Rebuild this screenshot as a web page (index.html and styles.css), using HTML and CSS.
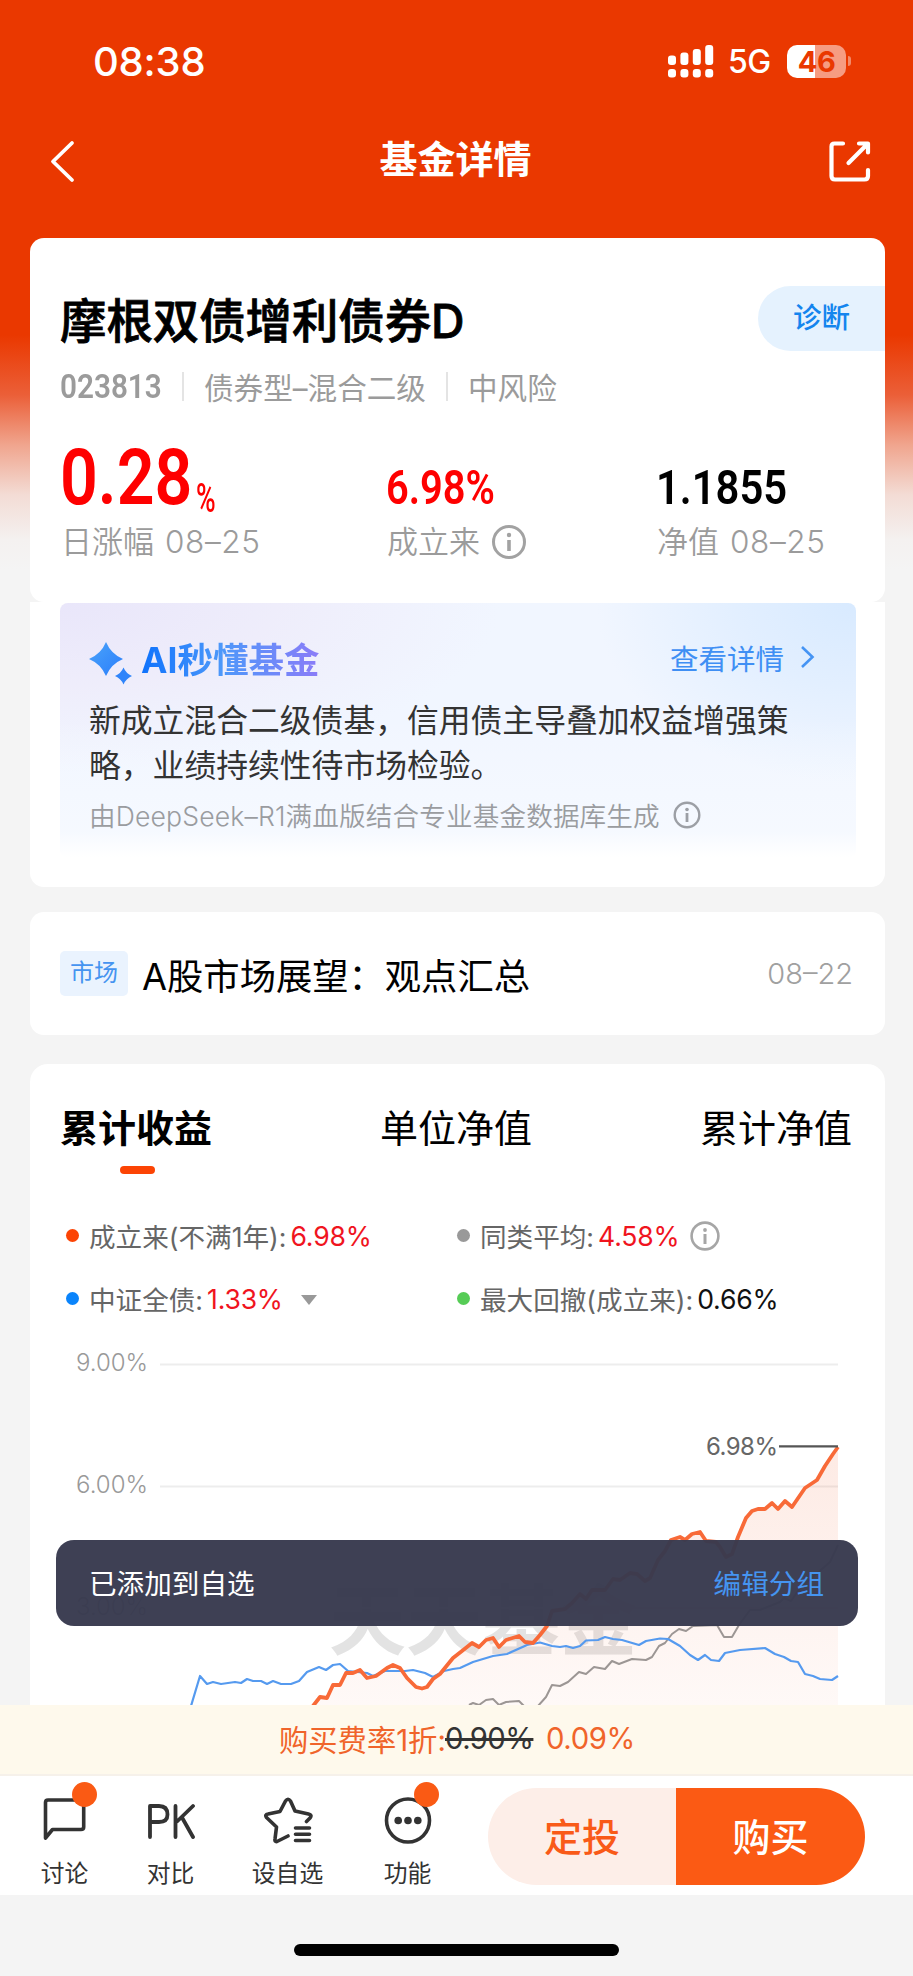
FILE: index.html
```html
<!DOCTYPE html>
<html lang="zh-CN">
<head>
<meta charset="utf-8">
<title>基金详情</title>
<link rel="stylesheet" href="styles.css">
</head>
<body>
<div class="screen">
  <div class="status">
    <span class="time">08:38</span>
    <div class="status-right">
      <svg class="signal" width="46" height="33" viewBox="0 0 46 33" fill="#fff">
        <rect x="0" y="10.500" width="8" height="9.500" rx="3"/><rect x="12.400" y="7.500" width="8" height="12.500" rx="3"/><rect x="24.800" y="4" width="8" height="16" rx="3"/><rect x="37.200" y="0" width="8" height="20" rx="3"/>
        <rect x="0" y="24" width="8" height="8.500" rx="3"/><rect x="12.400" y="24" width="8" height="8.500" rx="3"/><rect x="24.800" y="24" width="8" height="8.500" rx="3"/><rect x="37.200" y="24" width="8" height="8.500" rx="3"/>
      </svg>
      <span class="net">5G</span>
      <div class="battery">46</div>
      <i class="battery-cap"></i>
    </div>
  </div>
  <div class="navbar">
    <svg width="26" height="44" viewBox="0 0 26 44"><path d="M22 4L3 22.500L22 41" fill="none" stroke="#fff" stroke-width="3.800" stroke-linecap="round" stroke-linejoin="round"/></svg>
    <h1>基金详情</h1>
    <svg width="44" height="44" viewBox="0 0 44 44" fill="none" stroke="#fff" stroke-width="4.200" stroke-linecap="round" stroke-linejoin="round"><path d="M15 4.500H6.500Q3.500 4.500 3.500 7.500V37Q3.500 40.500 7 40.500H36.500Q40 40.500 40 37V31M31 4.500H40V13.500M39 5.500L20.500 24"/></svg>
  </div>

  <section class="card summary">
    <div class="name-row">
      <h2>摩根双债增利债券D</h2>
      <div class="diag">诊断</div>
    </div>
    <div class="meta">
      <span class="din code"><b>023813</b></span><i></i><span>债券型–混合二级</span><i></i><span>中风险</span>
    </div>
    <div class="stats">
      <div class="stat day"><div class="num"><span class="din big">0.28</span><span class="din pct">%</span></div><div class="lab">日涨幅<span class="day-date">08–25</span></div></div>
      <div class="stat since"><div class="num"><span class="din mid">6.98%</span></div><div class="lab">成立来
        <svg width="36" height="36" viewBox="0 0 36 36"><circle cx="18" cy="18" r="15.500" fill="none" stroke="#a2a2a2" stroke-width="3"/><circle cx="18" cy="11" r="2.200" fill="#a2a2a2"/><path d="M18 16V27" stroke="#a2a2a2" stroke-width="3.600"/></svg></div></div>
      <div class="stat nav"><div class="num"><span class="din net-val">1.1855</span></div><div class="lab">净值<span class="day-date">08–25</span></div></div>
    </div>
  </section>

  <section class="card ai-card">
    <div class="ai">
      <div class="ai-head">
        <svg width="44" height="44" viewBox="0 0 44 44"><defs><linearGradient id="g" x1="0" y1="0" x2="1" y2="1"><stop offset="0" stop-color="#4ba4fa"/><stop offset="1" stop-color="#2a7dfb"/></linearGradient></defs><path d="M17 1Q22 13 34 18Q22 23 17 35Q12 23 0 18Q12 13 17 1Z" fill="url(#g)"/><path d="M34.500 26.500Q37 32.500 43 35Q37 37.500 34.500 43.500Q32 37.500 26 35Q32 32.500 34.500 26.500Z" fill="#2f84fa"/></svg>
        <strong>AI秒懂基金</strong>
        <span class="more">查看详情</span>
        <svg width="16" height="26" viewBox="0 0 16 26"><path d="M2 3L12.500 13L2 23" fill="none" stroke="#4594f4" stroke-width="2.600"/></svg>
      </div>
      <p>新成立混合二级债基，信用债主导叠加权益增强策略，业绩持续性待市场检验。</p>
      <div class="source"><span>由DeepSeek–R1满血版结合专业基金数据库生成</span>
        <svg width="28" height="28" viewBox="0 0 28 28"><circle cx="14" cy="14" r="12.300" fill="none" stroke="#9c9fa5" stroke-width="2.400"/><circle cx="14" cy="8.500" r="1.800" fill="#9c9fa5"/><path d="M14 12V21" stroke="#9c9fa5" stroke-width="2.800"/></svg></div>
    </div>
  </section>

  <section class="card market">
    <span class="tag">市场</span><span class="headline">A股市场展望：观点汇总</span><span class="date">08–22</span>
  </section>

  <section class="card chart-card">
    <div class="tabs">
      <div class="tab active">累计收益<i></i></div><div class="tab">单位净值</div><div class="tab">累计净值</div>
    </div>
    <div class="legend">
      <div class="item"><i class="dot red"></i><span>成立来(不满1年):</span><b>6.98%</b></div>
      <div class="item"><i class="dot gray"></i><span>同类平均:</span><b>4.58%</b>
        <svg class="info" width="30" height="30" viewBox="0 0 30 30"><circle cx="15" cy="15" r="13.400" fill="none" stroke="#a6a6a6" stroke-width="2.600"/><circle cx="15" cy="9" r="1.900" fill="#a6a6a6"/><path d="M15 13V23" stroke="#a6a6a6" stroke-width="3"/></svg></div>
      <div class="item"><i class="dot blue"></i><span>中证全债:</span><b>1.33%</b><i class="caret"></i></div>
      <div class="item"><i class="dot green"></i><span>最大回撤(成立来):</span><b class="dark">0.66%</b></div>
    </div>
    <svg class="chart" width="855" height="375" viewBox="30 1330 855 375">
      <defs><linearGradient id="fill" gradientUnits="userSpaceOnUse" x1="0" y1="1447" x2="0" y2="1705"><stop offset="0" stop-color="#f26a3c" stop-opacity=".14"/><stop offset="1" stop-color="#f26a3c" stop-opacity=".04"/></linearGradient></defs>
      <text class="watermark" x="329" y="1649">天天基金</text>
      <g stroke="#ededed" stroke-width="2"><path d="M160 1364.500H838M160 1486.500H838M160 1608H838"/></g>
      <g class="axis"><text x="76" y="1371" textLength="72">9.00%</text><text x="76" y="1493" textLength="72">6.00%</text><text x="76" y="1614.500" textLength="72">3.00%</text></g>
      <path fill="url(#fill)" d="M313 1706L320 1697L327 1698L333 1685L340 1685L346 1673L360 1670L367 1678L376 1676L393 1665L400 1668L407 1678L416 1687L422 1688L427 1687L433 1679L440 1674L453 1658L472 1643L479 1647L486 1640L493 1638L499 1647L506 1640L519 1636L525 1642L533 1643L547 1626L552 1611L565 1609L580 1594L586 1599L592 1590L605 1590L613 1579L630 1573L645 1581L650 1578L658 1560L671 1540L680 1537L685 1540L692 1534L700 1532L706 1541L716 1542L726 1557L732 1554L738 1537L746 1518L752 1511L765 1509L772 1503L778 1509L785 1501L792 1507L805 1488L817 1480L838 1447V1706Z"/>
      <g fill="none" stroke-linejoin="round">
        <path stroke="#9c9694" stroke-width="2" d="M469 1705L473 1703L479 1705L486 1700L493 1699L499 1705L506 1702L519 1701L524 1706L538 1706L546 1697L552 1685L560 1686L568 1682L579 1672L586 1674L594 1667L605 1669L612 1661L619 1664L632 1659L646 1660L652 1657L659 1646L665 1643L672 1634L679 1629L686 1631L693 1626L717 1625L724 1637L732 1637L739 1625L750 1610L760 1610L780 1602L784 1598L791 1601L800 1588L830 1562L838 1545"/>
        <path stroke="#559aef" stroke-width="2.200" d="M191 1706L200 1676L207 1684L213 1682L221 1684L235 1682L241 1683L247 1679L253 1681L261 1681L267 1684L273 1681L281 1684L291 1684L299 1681L307 1672L319 1667L326 1670L333 1665L340 1664L348 1671L367 1673L373 1676L385 1671L405 1671L413 1670L425 1673L433 1677L444 1671L453 1669L460 1668L473 1662L493 1656L507 1654L527 1645L540 1642.500L552 1646L560 1647L566 1646L573 1648L580 1646L586 1640.500L598 1640L605 1637L613 1639L622 1640L639 1645L646 1641L660 1638.500L668 1639L680 1646L690 1655L698 1660L705 1655L711 1660L719 1661L725 1653L740 1650L765 1648L775 1654L784 1657L791 1661L798 1662L805 1674L813 1676L820 1679L832 1680L838 1676"/>
        <path stroke="#f86a38" stroke-width="3.800" d="M313 1706L320 1697L327 1698L333 1685L340 1685L346 1673L353 1673L360 1670L367 1678L376 1676L387 1668L393 1665L400 1668L407 1678L416 1687L422 1688.500L427 1687L433 1679L440 1674L453 1658L462 1651L472 1643L479 1647L486 1640L493 1638L499 1647L506 1640L519 1636L525 1642L533 1643L540 1635L547 1626L552 1611L565 1609L572 1603L580 1594L586 1599L592 1590L605 1590L613 1579L620 1580L630 1573L637 1574L645 1581L650 1578L658 1560L665 1551L671 1540L680 1537L685 1540L692 1534L700 1532L706 1541L716 1542L720 1547L726 1557L732 1554L738 1537L746 1518L752 1511L758 1509L765 1509L772 1503L778 1509L785 1501L792 1507L805 1488L817 1480L825 1466L833 1454L838 1447"/>
      </g>
      <path d="M779 1446.300H838" stroke="#555" stroke-width="2.200"/>
      <text class="mark" x="706" y="1455" textLength="72">6.98%</text>
    </svg>
    <div class="toast"><span>已添加到自选</span><a>编辑分组</a></div>
  </section>

  <div class="fee"><span class="fee-label">购买费率1折:</span><s>0.90%</s><span class="fee-now">0.09%</span></div>

  <div class="bottom">
    <div class="act">
      <div class="ico"><svg width="48" height="50" viewBox="0 0 48 50" fill="none" stroke="#333" stroke-width="3.600" stroke-linejoin="round"><path d="M4.500 44V8.500Q4.500 6 7 6H40Q42.700 6 42.700 8.500V33Q42.700 35.500 40 35.500H11.500Z"/></svg><i class="badge chat"></i></div><span>讨论</span></div>
    <div class="act">
      <div class="ico"><svg width="48" height="50" viewBox="0 0 48 50" fill="none" stroke="#333" stroke-width="3.800" stroke-linecap="round" stroke-linejoin="round"><path d="M3 43V12H12Q20.500 12 20.500 20.500Q20.500 28 12 28H3M28.500 12V43M46 12L30 27.500M35 23.500L46 43"/></svg></div><span>对比</span></div>
    <div class="act">
      <div class="ico"><svg width="50" height="50" viewBox="0 0 50 50" fill="none" stroke="#333" stroke-width="3.600" stroke-linecap="round" stroke-linejoin="round"><path d="M25 42L14 47.500Q11.500 48 12 45L13.500 33L3.500 23.500Q1.500 20.500 5 20L17 17.500L22.500 7Q25 3.500 27.500 7L32 17L45.500 20Q49.500 21 47 24L43.500 27.500"/><path d="M32.500 34H46.500M32.500 40.300H46.500M32.500 46.500H46.500"/></svg></div><span>设自选</span></div>
    <div class="act">
      <div class="ico"><svg width="48" height="50" viewBox="0 0 48 50"><circle cx="24" cy="26.500" r="21.500" fill="none" stroke="#333" stroke-width="3.600"/><g fill="#333"><circle cx="14.200" cy="26.500" r="3.800"/><circle cx="24" cy="26.500" r="3.800"/><circle cx="33.800" cy="26.500" r="3.800"/></g></svg><i class="badge func"></i></div><span>功能</span></div>
    <div class="buttons"><div class="plan">定投</div><div class="buy">购买</div></div>
  </div>
  <div class="home"><i></i></div>
</div>
</body>
</html>
```
FILE: styles.css
```css
* { box-sizing: border-box; }
body { margin: 0; }
.screen {
  width: 913px; height: 1976px; overflow: hidden;
  display: flex; flex-direction: column;
  font-family: Inter, "Noto Sans CJK SC", sans-serif;
  color: #000; white-space: nowrap;
  background: linear-gradient(180deg, #ea3800 0, #ea3800 335px, #eb5f38 395px, #f0a58e 445px, #f3dcd5 495px, #f4f1f0 540px, #f4f4f4 570px);
}
h1, h2, p { margin: 0; }
svg { flex: none; display: block; }

.status { height: 122px; padding: 0 62px 0 93px; display: flex; align-items: center; justify-content: space-between; color: #fff; }
.time { font-size: 40px; font-weight: 550; letter-spacing: -0.2px; }
.status-right { display: flex; align-items: center; }
.net { margin-left: 14px; width: 44px; font-size: 32px; font-weight: 450; letter-spacing: -0.5px; }
.battery {
  margin-left: 15px; width: 59px; height: 33px; border-radius: 10px; line-height: 33px;
  text-align: center; font-size: 29px; font-weight: 700; color: #ea3800; letter-spacing: -0.5px;
  background: linear-gradient(90deg, #fff 47%, #f69c82 47%);
}
.battery-cap { width: 3px; height: 10px; margin-left: 2px; border-radius: 0 4px 4px 0; background: #f28a6a; }

.navbar { height: 116px; padding: 0 41px 38px 50px; display: flex; align-items: center; justify-content: space-between; color: #fff; }
.navbar h1 { font-size: 38px; font-weight: 700; margin-left: 7px; line-height: 48px; padding-bottom: 5px; }

.card { width: 855px; margin-left: 30px; background: #fff; border-radius: 14px; flex: none; }
.summary { height: 364px; padding-left: 30px; }
.name-row { height: 65px; margin-top: 48px; display: flex; align-items: center; justify-content: space-between; }
.name-row h2 { font-size: 46.400px; font-weight: 500; line-height: 65px; padding-top: 5px; -webkit-text-stroke: .8px #000; }
.diag { width: 127px; height: 65px; border-radius: 33px 0 0 33px; background: #e5f2fe; color: #1485ee; font-size: 28.500px; font-weight: 500; line-height: 63px; padding-left: 35px; }
.meta { height: 34px; margin-top: 18px; display: flex; align-items: center; color: #9b9b9b; font-size: 29.600px; }
.meta i { width: 2px; height: 29px; background: #e4e4e4; margin: 0 20px; }
.din { display: inline-block; font-family: Roboto, sans-serif; transform-origin: 0 50%; white-space: nowrap; }
.code { width: 102px; font-size: 33px; transform: scaleX(.9); }
.code b { font-weight: 600; }
.stats { display: flex; }
.stat { height: 150px; }
.day { width: 326px; }
.since { width: 270px; }
.num { height: 118px; display: flex; align-items: flex-end; color: #fe0000; font-weight: 600; }
.big { font-size: 77px; line-height: 86px; width: 136px; transform: scaleX(.86); }
.pct { font-size: 41px; line-height: 46px; transform: scaleX(.65); font-weight: 500; }
.mid { font-size: 48px; line-height: 66px; transform: scaleX(.83); }
.net-val { font-size: 48px; line-height: 66px; color: #000; transform: scaleX(.87); }
.lab { height: 40px; line-height: 40px; margin-top: 1px; padding-left: 1px; display: flex; align-items: center; color: #9b9b9b; font-size: 31px; font-weight: 350; }
.lab svg { margin-left: 11px; }
.day-date { font-size: 31.500px; margin-left: 11px; letter-spacing: .6px; }

.ai-card { height: 285px; padding: 1px 29px 0 30px; border-radius: 0 0 14px 14px; }
.ai {
  height: 254px; border-radius: 8px; padding: 29px 40px 0 29px;
  background:
    linear-gradient(180deg, rgba(255,255,255,0) 45%, rgba(250,252,255,.5) 90%, #fff 100%),
    radial-gradient(ellipse 260px 180px at 100% 0, #d8eaff 0, rgba(216,234,255,.6) 45%, rgba(216,234,255,0) 100%),
    radial-gradient(ellipse 440px 170px at 0 0, #e9e6fa 0, rgba(238,235,250,.8) 50%, rgba(243,247,255,0) 100%),
    #f1f6ff;
}
.ai-head { height: 50px; display: flex; align-items: center; }
.ai-head > svg:first-child { margin-top: 11px; }
.ai-head strong { margin-left: 8px; font-size: 35.500px; font-weight: 700; color: transparent; background: linear-gradient(90deg, #0e72fc, #4d98fa 45%, #8b7cf8); -webkit-background-clip: text; background-clip: text; }
.more { margin-left: auto; margin-right: 16px; color: #3f8ff4; font-size: 28.500px; }
.ai p { margin-top: 16px; width: 704px; white-space: normal; font-size: 31.800px; line-height: 45px; color: #333; }
.source { height: 44px; margin-top: 5px; display: flex; align-items: center; color: #9a9ca0; font-size: 26.600px; font-weight: 350; }
.source span { letter-spacing: .14px; padding-bottom: 2px; }
.source svg { margin-left: 13px; }

.market { height: 123px; margin-top: 25px; padding: 0 32px 0 30px; display: flex; align-items: center; }
.tag { width: 68px; height: 45px; border-radius: 5px; background: #eaf3fe; color: #4594f0; font-size: 24px; line-height: 43px; text-align: center; }
.headline { margin-left: 14px; font-size: 36.300px; }
.date { margin-left: auto; font-size: 29px; font-weight: 350; color: #a0a0a0; }

.chart-card { position: relative; height: 641px; margin-top: 29px; border-radius: 18px 18px 0 0; overflow: hidden; }
.tabs { height: 140px; padding: 40px 33px 0 30px; display: flex; justify-content: space-between; font-size: 38px; line-height: 48px; }
.tab.active { font-weight: 700; }
.tab i { display: block; width: 35px; height: 8px; margin: 14px 0 0 60px; border-radius: 4px; background: #fc4404; }
.legend { height: 126px; padding-left: 36px; display: grid; grid-template-columns: 391px 1fr; grid-template-rows: 63px 63px; }
.item { display: flex; align-items: center; font-size: 26.600px; color: #666; }
.item b { margin-left: 4px; font-weight: 400; color: #f0141e; letter-spacing: -.2px; }
.item .dark { color: #111; }
.dot { width: 13px; height: 13px; border-radius: 50%; margin-right: 10px; }
.red { background: #fc4404; } .gray { background: #999; } .blue { background: #0a84fb; } .green { background: #56cc56; }
.info { margin-left: 11px; }
.caret { margin: 3px 0 0 18px; border: 8px solid transparent; border-top: 10px solid #999; border-bottom: 0; }
.axis { font-size: 24px; fill: #999; font-weight: 350; }
.mark { font-size: 24px; fill: #666; }
.watermark { font-size: 77px; font-weight: 700; fill: #e3e3e3; }
.toast {
  position: absolute; left: 26px; top: 476px; width: 802px; height: 86px; border-radius: 18px;
  padding: 0 34px 2px 33px; display: flex; align-items: center; justify-content: space-between;
  background: rgba(56,58,78,.97); color: #fff; font-size: 27.600px;
}
.toast a { color: #4594f0; }

.fee { flex: none; height: 71px; padding: 0 0 3px 279px; display: flex; align-items: center; background: #fef9ec; border-bottom: 2px solid #f6f1ea; font-size: 29.300px; color: #f0642a; }
.fee-label { width: 166px; }
.fee s { color: #333; text-decoration-thickness: 2.500px; width: 87px; letter-spacing: -.6px; }
.fee-now { margin-left: 14px; letter-spacing: -.4px; }

.bottom { flex: none; height: 119px; background: #fff; padding-left: 11px; display: grid; grid-template-columns: 107px 105px 129px 111px 1fr; }
.act { display: flex; flex-direction: column; align-items: center; padding-top: 18px; font-size: 23.800px; line-height: 30px; color: #333; }
.act span { margin-top: 15px; }
.ico { position: relative; height: 50px; }
.badge { position: absolute; top: -12px; width: 25px; height: 25px; border-radius: 50%; background: #fa5a14; }
.chat { left: 31px; }
.func { left: 30px; }
.buttons { margin: 12px 0 0 25px; width: 377px; height: 97px; display: flex; border-radius: 49px; overflow: hidden; font-size: 38px; font-weight: 500; line-height: 98px; text-align: center; }
.plan { width: 188px; background: #fdeee8; color: #f95a18; }
.buy { width: 189px; background: #fb5a14; color: #fff; }
.home { height: 81px; background: #f4f4f4; padding-top: 49px; }
.home i { display: block; width: 325px; height: 12px; margin-left: 294px; border-radius: 6px; background: #000; }
```
